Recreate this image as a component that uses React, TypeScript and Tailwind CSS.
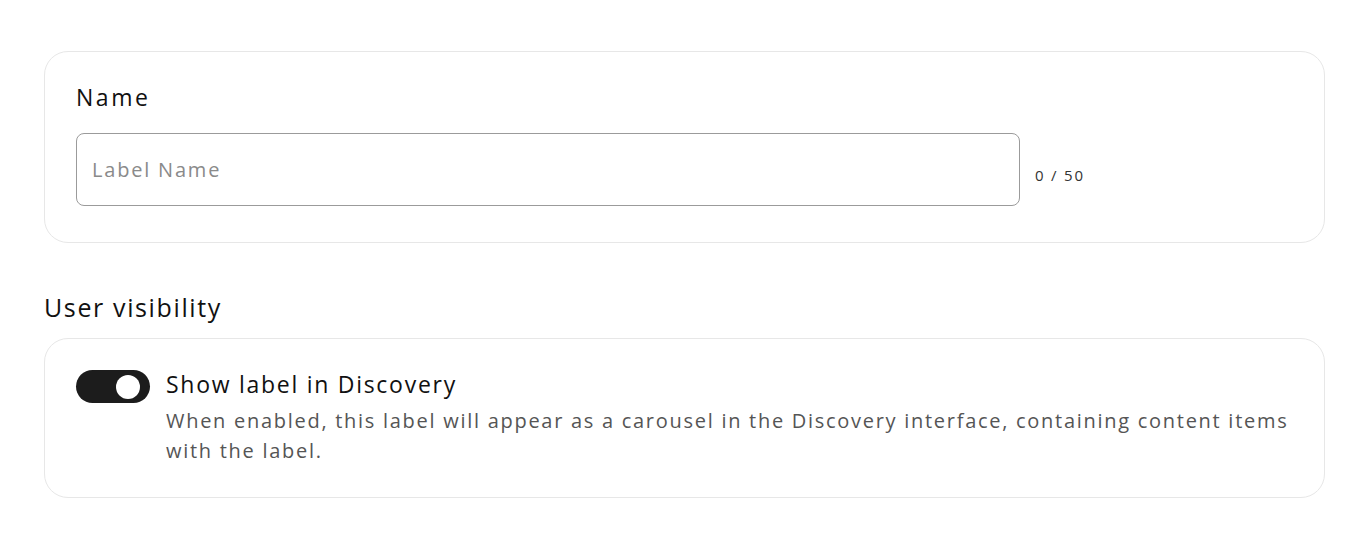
import { useState } from 'react';

// Label settings form: name field with counter, plus a visibility toggle card.

const font = "font-['Open_Sans',_'Noto_Sans',_sans-serif]";

export default function App() {
  const [name, setName] = useState('');
  const [visible, setVisible] = useState(true);

  return (
    <main className={`min-h-screen bg-white pl-[44px] pr-[38px] pt-[51px] text-[#111] ${font}`}>
      <section className="rounded-[24px] border border-[#e7e7e7] px-[31px] pb-[36px] pt-[30px]">
        <label htmlFor="label-name" className="block text-[23px] leading-[30px] font-medium tracking-[0.11em]">
          Name
        </label>
        <div className="mt-[21px] flex items-center gap-[15px]">
          <input
            id="label-name"
            value={name}
            maxLength={50}
            onChange={(e) => setName(e.target.value)}
            placeholder="Label Name"
            className="h-[73px] w-[944px] rounded-[8px] border border-[#9b9b9b] px-[15px] text-[20px] tracking-[0.09em] text-[#111] outline-none placeholder:text-[#8a8a8a]"
          />
          <span className="pt-[11px] text-[15px] tracking-[0.12em] text-[#333]">
            {name.length} / 50
          </span>
        </div>
      </section>

      <h2 className="mt-[48px] text-[25px] leading-[32px] font-medium tracking-[0.065em]">User visibility</h2>

      <section className="mt-[15px] flex gap-[16px] rounded-[24px] border border-[#e7e7e7] px-[31px] pb-[31px] pt-[31px]">
        <button
          type="button"
          role="switch"
          aria-checked={visible}
          onClick={() => setVisible(!visible)}
          className={`flex h-[33px] w-[74px] shrink-0 items-center rounded-full px-[10px] ${
            visible ? 'justify-end bg-[#1c1c1c]' : 'justify-start bg-[#cfcfcf]'
          }`}
        >
          <span className="h-[24px] w-[24px] rounded-full bg-white" />
        </button>
        <div className="-mt-[1px]">
          <p className="text-[23px] leading-[30px] font-medium tracking-[0.075em]">Show label in Discovery</p>
          <p className="mt-[7px] text-[20px] leading-[30px] tracking-[0.086em] text-[#555]">
            When enabled, this label will appear as a carousel in the Discovery interface, containing content items
            with the label.
          </p>
        </div>
      </section>
    </main>
  );
}
